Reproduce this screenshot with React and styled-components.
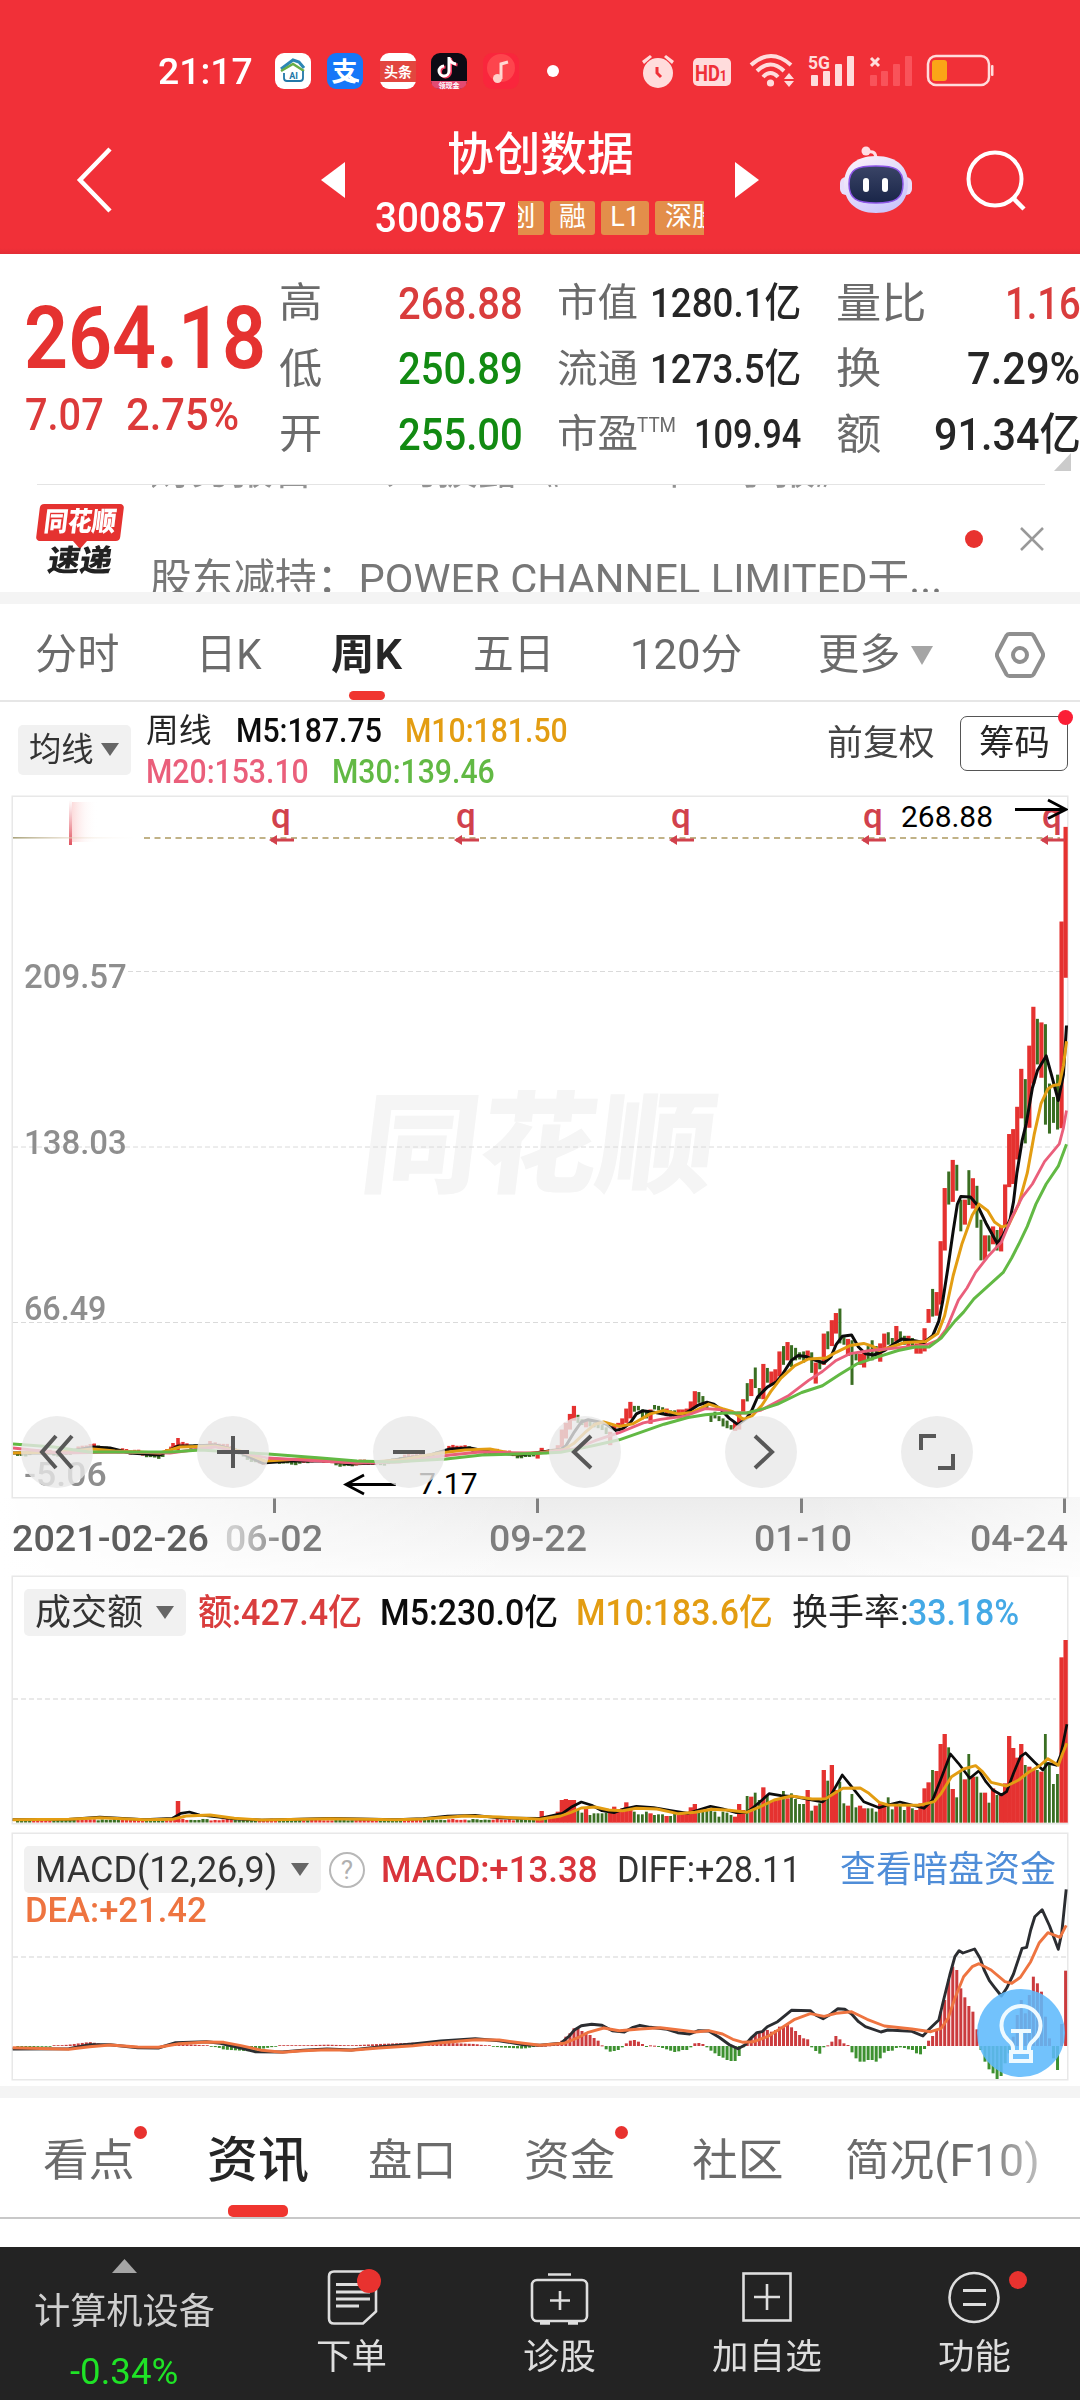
import { useLayoutEffect, useRef, useState } from "react";
import styled, { createGlobalStyle } from "styled-components";

const UP = "#e53230";
const DOWN = "#3a6e22";
const ORANGE = "#e39d12";
const PINK = "#ea5f7b";
const GREEN = "#62b944";

// Text squeezed to a given width, the quote font is narrower than Roboto
const Fit = ({ w, ml, size, color, weight, italic, children }) => {
    const ref = useRef(null);
    const [scale, setScale] = useState(1);
    useLayoutEffect(() => {
        setScale((w + size * 0.08) / ref.current.offsetWidth);
    }, [w, size]);
    return (
        <FitBox $w={w} $ml={ml} $size={size} $color={color} $weight={weight} $italic={italic}>
            <span ref={ref} style={{ transform: `scaleX(${scale})` }}>
                {children}
            </span>
        </FitBox>
    );
};

/* ---------- chart data ---------- */

// newest week first: direction, high, low, volume top, macd end
const weeks = [
    [1, 105, 443, 210, 1202], [1, 317, 780, 262, 1362], [0, 660, 783, 612, 1500], [0, 710, 768, 642, 1465],
    [0, 680, 792, 583, 1405], [0, 547, 772, 492, 1340], [1, 543, 667, 605, 1265], [0, 535, 637, 600, 1240],
    [1, 508, 680, 600, 1220], [1, 595, 779, 590, 1275], [0, 670, 814, 585, 1330], [1, 647, 758, 522, 1290],
    [1, 732, 850, 563, 1335], [1, 782, 905, 534, 1400], [1, 793, 912, 498, 1450], [1, 906, 1000, 640, 1480],
    [1, 1000, 1056, 670, 1518], [0, 1008, 1054, 675, 1527], [1, 1000, 1040, 655, 1510], [0, 1020, 1056, 698, 1498],
    [1, 1020, 1075, 668, 1475], [0, 985, 1076, 668, 1440], [0, 909, 1003, 620, 1378], [1, 892, 960, 620, 1325],
    [0, 874, 952, 552, 1308], [1, 940, 996, 628, 1282], [0, 940, 1011, 605, 1255], [0, 862, 920, 682, 1200],
    [1, 851, 945, 657, 1190], [0, 877, 951, 532, 1228], [1, 914, 1054, 492, 1290], [1, 1033, 1175, 522, 1325],
    [1, 1147, 1200, 603, 1382], [0, 1140, 1202, 600, 1398], [1, 1185, 1216, 637, 1412], [1, 1228, 1280, 655, 1437],
    [1, 1255, 1285, 700, 1453], [1, 1262, 1285, 720, 1450], [0, 1250, 1270, 715, 1440], [1, 1245, 1268, 708, 1438],
    [0, 1245, 1265, 720, 1434], [0, 1235, 1258, 705, 1432], [1, 1223, 1258, 705, 1434], [0, 1250, 1265, 718, 1442],
    [0, 1237, 1265, 682, 1443], [1, 1240, 1280, 703, 1448], [1, 1262, 1303, 700, 1465], [0, 1268, 1292, 725, 1475],
    [0, 1255, 1300, 715, 1470], [0, 1268, 1300, 715, 1470], [1, 1280, 1316, 715, 1475], [1, 1285, 1310, 707, 1475],
    [0, 1283, 1300, 712, 1465], [0, 1255, 1355, 672, 1447], [1, 1252, 1290, 707, 1425], [0, 1248, 1265, 700, 1420],
    [0, 1184, 1262, 635, 1408], [1, 1194, 1240, 660, 1398], [1, 1210, 1268, 585, 1415], [0, 1235, 1275, 632, 1426],
    [1, 1240, 1310, 600, 1432], [0, 1300, 1320, 700, 1451], [1, 1305, 1352, 707, 1443], [0, 1282, 1328, 722, 1432],
    [1, 1278, 1298, 660, 1408], [0, 1280, 1305, 702, 1405], [0, 1282, 1298, 702, 1395], [0, 1272, 1300, 687, 1383],
    [0, 1266, 1315, 670, 1372], [1, 1259, 1300, 685, 1360], [0, 1268, 1310, 663, 1368], [1, 1280, 1336, 690, 1370],
    [1, 1320, 1355, 690, 1380], [1, 1325, 1355, 695, 1385], [0, 1317, 1350, 675, 1380], [1, 1308, 1387, 652, 1380],
    [0, 1362, 1386, 690, 1388], [0, 1316, 1362, 668, 1392], [1, 1342, 1380, 680, 1405], [0, 1351, 1392, 678, 1415],
    [1, 1387, 1415, 720, 1432], [1, 1415, 1455, 702, 1458], [1, 1440, 1458, 740, 1473], [0, 1445, 1455, 735, 1473],
    [0, 1435, 1452, 728, 1470], [0, 1430, 1448, 725, 1463], [0, 1425, 1436, 740, 1458], [0, 1415, 1430, 725, 1450],
    [0, 1420, 1438, 720, 1442], [0, 1395, 1410, 722, 1432], [0, 1380, 1400, 722, 1422], [0, 1371, 1395, 722, 1419],
    [1, 1369, 1405, 702, 1420], [1, 1392, 1412, 712, 1432], [1, 1408, 1422, 730, 1440], [1, 1410, 1425, 730, 1440],
    [1, 1410, 1430, 730, 1444], [0, 1412, 1428, 722, 1446], [0, 1412, 1426, 738, 1442], [1, 1408, 1425, 738, 1438],
    [0, 1405, 1420, 733, 1434], [0, 1402, 1412, 733, 1431], [0, 1400, 1410, 735, 1427], [1, 1410, 1442, 730, 1426],
    [0, 1412, 1430, 725, 1430], [0, 1410, 1432, 733, 1422], [0, 1402, 1412, 733, 1415], [0, 1402, 1415, 725, 1410],
    [1, 1393, 1430, 715, 1412], [1, 1408, 1440, 697, 1420], [1, 1430, 1448, 715, 1432], [1, 1440, 1450, 718, 1440],
    [1, 1445, 1455, 710, 1443], [1, 1460, 1490, 722, 1445], [0, 1450, 1465, 728, 1438], [0, 1445, 1456, 730, 1426],
    [0, 1442, 1452, 730, 1412], [0, 1440, 1450, 730, 1404], [0, 1436, 1448, 735, 1395], [1, 1435, 1450, 716, 1388],
    [0, 1432, 1445, 728, 1383], [0, 1422, 1440, 718, 1375], [1, 1402, 1435, 690, 1375], [1, 1420, 1455, 690, 1390],
    [1, 1440, 1475, 687, 1400], [1, 1455, 1495, 690, 1412], [1, 1490, 1502, 725, 1420], [1, 1498, 1506, 735, 1424],
    [1, 1500, 1508, 738, 1426], [0, 1502, 1510, 740, 1427], [1, 1496, 1510, 723, 1427], [1, 1504, 1520, 742, 1427],
];

const pts = (s) => s.trim().split(/\s+/).map((p) => p.split(",").map(Number));
const toLine = (list) => list.map((p) => p.map((n) => n.toFixed(1)).join(",")).join(" ");
const kPts = (s) => pts(s).map(([x, y]) => [540 + x / 2.904, 780 + y / 2.24]);
const subPts = (s, x0 = 540) => pts(s).map(([x, y]) => [x0 + x / 2.904, 1570 + y / 3]);
const valueAt = (list, x) => {
    const i = Math.max(1, list.findIndex((p) => p[0] >= x));
    const [a, b] = [list[i - 1], list[i]];
    return a[1] + ((b[1] - a[1]) * (x - a[0])) / (b[0] - a[0]);
};
const weekX = (i) => 1065.6 - i * 4.03;

const ma5 = [
    ...pts("13,1453 60,1453 93,1447 110,1448 130,1453 160,1455 178,1446 192,1446 215,1445 235,1450 262,1463 290,1461 330,1461 350,1464 375,1463 400,1459 430,1455 450,1449 470,1448 490,1452 520,1455"),
    ...kPts("0,1506 60,1500 75,1492 100,1460 120,1438 140,1433 165,1437 190,1442 205,1450 220,1457 240,1453 262,1440 280,1420 298,1413 335,1417 370,1422 410,1424 440,1410 460,1400 485,1394 505,1398 525,1410 550,1430 575,1444 600,1430 615,1412 632,1382 660,1360 687,1348 705,1330 730,1300 750,1289 775,1292 800,1300 825,1306 845,1292 860,1265 878,1246 905,1243 925,1270 945,1285 970,1288 1000,1278 1030,1262 1050,1252 1080,1255 1115,1260 1140,1245 1158,1212 1170,1165 1185,1090 1200,1010 1212,950 1222,933 1250,934 1270,952 1295,992 1328,1038 1345,1020 1365,985 1375,945 1385,880 1400,808 1412,770 1430,690 1445,650 1470,618 1485,660 1505,718 1520,660 1529,550"),
];
const ma10 = [
    ...pts("13,1453 60,1452 93,1449 115,1451 160,1453 180,1447 215,1446 240,1451 265,1461 300,1459 330,1461 357,1463 400,1460 440,1453 465,1450 490,1449 515,1454"),
    ...kPts("0,1507 70,1500 100,1485 130,1462 160,1443 185,1438 230,1448 270,1442 320,1420 360,1412 400,1420 440,1417 490,1398 530,1408 560,1415 590,1432 615,1425 645,1400 670,1370 700,1340 740,1312 780,1297 830,1295 860,1282 900,1267 940,1262 965,1268 985,1278 1020,1270 1060,1260 1120,1258 1155,1240 1175,1200 1200,1110 1225,1040 1255,975 1275,950 1300,965 1320,990 1340,1001 1360,998 1390,950 1415,880 1435,795 1455,725 1475,692 1490,684 1508,682 1520,640 1529,585"),
];
const ma20 = [
    ...pts("13,1448 60,1453 120,1452 170,1453 215,1447 268,1458 320,1461 357,1463 400,1462 450,1455 480,1452 530,1453"),
    ...kPts("0,1507 100,1498 160,1480 230,1462 300,1440 350,1432 420,1425 480,1408 520,1410 560,1418 600,1418 640,1412 720,1380 780,1345 820,1325 860,1300 900,1285 960,1278 1040,1272 1120,1266 1155,1255 1180,1230 1215,1165 1240,1138 1265,1103 1300,1068 1340,1035 1370,980 1400,935 1430,905 1465,855 1490,832 1508,815 1520,780 1529,740"),
];
const ma30 = [
    ...pts("13,1444 54,1447 89,1452 171,1452 200,1450 268,1454 321,1458 357,1461 393,1462 446,1459 482,1455"),
    ...kPts("0,1508 60,1506 100,1500 160,1490 230,1478 290,1462 360,1443 430,1428 480,1422 540,1418 600,1418 650,1408 690,1398 760,1372 820,1357 870,1332 920,1308 970,1295 1040,1278 1090,1270 1130,1270 1165,1250 1205,1212 1230,1192 1260,1162 1300,1134 1345,1103 1370,1070 1390,1040 1415,1000 1440,950 1470,905 1505,865 1529,816"),
];
const vol5 = [
    ...subPts("37,749 200,748 290,741 420,749 500,745 525,730 550,726 580,735 680,747 760,750 960,745 1150,749 1230,746 1300,738 1380,736 1450,744", 0),
    ...subPts("0,745 30,738 65,730 90,712 120,696 150,706 180,722 215,728 245,716 280,709 330,713 380,722 430,730 460,720 495,709 530,716 570,728 600,727 620,712 645,690 665,671 700,677 740,680 780,688 820,696 845,675 878,615 905,650 940,695 985,713 1010,705 1045,696 1080,705 1115,715 1140,690 1165,625 1192,552 1215,580 1248,625 1275,602 1295,635 1315,660 1340,675 1355,665 1375,610 1395,560 1410,549 1435,575 1460,600 1475,580 1500,586 1512,555 1530,463"),
];
const vol10 = [
    ...subPts("37,749 200,748 290,743 420,749 500,748 540,738 610,735 680,745 760,750 960,746 1150,749 1230,747 1350,738 1450,741", 0),
    ...subPts("0,748 60,738 90,727 120,714 160,711 200,720 240,722 280,715 340,717 400,731 450,727 500,718 550,721 600,727 640,710 680,690 730,678 790,687 830,686 855,670 880,655 930,654 955,670 985,697 1010,705 1100,706 1145,695 1165,670 1195,620 1230,597 1265,587 1285,605 1310,637 1355,648 1390,630 1420,606 1450,588 1475,566 1505,586 1518,550 1530,520"),
];
const diff = [
    ...subPts("37,1437 200,1436 260,1424 320,1424 400,1433 460,1434 510,1418 600,1415 640,1420 700,1434 740,1445 820,1446 880,1441 950,1437 1020,1440 1100,1431 1200,1422 1280,1413 1380,1406 1450,1412 1520,1424", 0),
    ...subPts("0,1426 60,1420 85,1398 100,1380 120,1367 150,1363 180,1366 210,1382 245,1386 270,1372 290,1366 320,1372 370,1378 400,1388 435,1392 460,1382 490,1383 520,1402 550,1424 575,1436 595,1425 615,1402 630,1388 645,1385 660,1370 690,1355 730,1321 785,1322 800,1335 822,1346 845,1332 865,1316 885,1318 905,1332 925,1355 945,1370 990,1386 1010,1380 1080,1384 1112,1398 1130,1378 1158,1350 1172,1290 1190,1215 1205,1160 1217,1142 1228,1149 1262,1137 1278,1165 1290,1200 1305,1232 1320,1252 1340,1278 1355,1255 1375,1212 1400,1135 1413,1132 1425,1080 1437,1040 1458,1019 1480,1068 1505,1138 1515,1090 1528,958"),
];
const dea = [
    ...subPts("37,1433 200,1438 260,1430 320,1425 400,1431 460,1432 520,1421 600,1416 650,1417 700,1427 760,1441 820,1447 880,1442 950,1439 1020,1441 1100,1434 1200,1427 1280,1418 1380,1409 1450,1410 1520,1420", 0),
    ...subPts("0,1426 70,1420 110,1403 140,1387 185,1374 230,1382 290,1377 350,1373 410,1381 450,1386 490,1382 530,1392 560,1408 590,1417 620,1415 660,1400 700,1375 740,1348 785,1331 825,1339 860,1330 905,1325 950,1348 1000,1368 1080,1377 1135,1385 1165,1375 1185,1345 1205,1285 1230,1220 1255,1190 1275,1181 1310,1200 1350,1235 1370,1240 1395,1222 1425,1175 1450,1118 1475,1088 1510,1102 1528,1066"),
];

// the flat early years: small bodies that follow the averages
const early = Array.from({ length: 261 - weeks.length }, (_, n) => {
    const i = n + weeks.length;
    const x = weekX(i);
    const wave = Math.sin(i * 0.55) + Math.sin(i * 1.7) * 0.5;
    const mid = valueAt(ma5, x) - wave * 1.5;
    return { x, up: wave > 0, mid, vol: 2 + Math.abs(wave) * 1.2, macd: valueAt(diff, x) - valueAt(dea, x) };
});

const Lines = ({ items }) =>
    items.map(([list, color, width]) => (
        <polyline key={color} points={toLine(list)} fill="none" stroke={color} strokeWidth={width} strokeLinejoin="round" />
    ));

const KChart = () => (
    <ChartSvg viewBox="13 797 1055 700" width="1055" height="700">
        <defs>
            <linearGradient id="glow" x1="0" x2="1">
                <stop offset="0" stopColor="#fbd0d0" stopOpacity="0.75" />
                <stop offset="0.5" stopColor="#fdeeee" stopOpacity="0.4" />
                <stop offset="1" stopColor="#fff" stopOpacity="0" />
            </linearGradient>
            <linearGradient id="streak" x1="0" x2="0" y1="0" y2="1">
                <stop offset="0" stopColor="#e86a74" stopOpacity="0" />
                <stop offset="1" stopColor="#e05360" />
            </linearGradient>
            <linearGradient id="fade" x1="0" x2="1">
                <stop offset="0" stopColor="#a9a37c" />
                <stop offset="0.5" stopColor="#e9d9c5" stopOpacity="0.5" />
                <stop offset="1" stopColor="#fff" stopOpacity="0" />
            </linearGradient>
        </defs>
        <g stroke="#dadada" strokeWidth="1" strokeDasharray="5 3">
            <path d="M128 971.5H1060" />
            <path d="M13 1147H1060" />
            <path d="M13 1322.5H1066" />
        </g>
        <rect x="72" y="802" width="26" height="40" fill="url(#glow)" />
        <rect x="69" y="800" width="3" height="45" fill="url(#streak)" />
        <rect x="13" y="837" width="130" height="1.6" fill="url(#fade)" />
        <path d="M144 838H1060" stroke="#ad9960" strokeWidth="1.6" strokeDasharray="6 4.5" />
        {early.map((d) => (
            <rect key={d.x} x={d.x - 1.8} y={d.mid - 2} width="3.4" height="4" fill={d.up ? UP : DOWN} />
        ))}
        <path d="M178 1438v12M173 1443v6M94 1444v5M210 1441v6" stroke={UP} strokeWidth="3.6" />
        {weeks.map(([up, high, low], i) => (
            <rect
                key={i}
                x={weekX(i) - (up ? 2.1 : 1.5)}
                y={780 + high / 2.24}
                width={up ? 4.2 : 3}
                height={(low - high) / 2.24}
                fill={up ? UP : DOWN}
            />
        ))}
        <Lines items={[[ma5, "#0c0c0c", 3], [ma10, ORANGE, 3], [ma20, PINK, 2.8], [ma30, GREEN, 3]]} />
        {[281, 466, 681, 873, 1052].map((x) => (
            <g key={x}>
                <text x={x} y="828" textAnchor="middle" fontSize="35" fontWeight="500" fill="#d1414c">
                    q
                </text>
                <path d={`M${x - 10} 840h23`} stroke="#d1414c" strokeWidth="3" />
                <path d={`M${x - 12} 840l8 -5v10z`} fill="#d1414c" />
            </g>
        ))}
        <text x="901" y="827" fontSize="30" fill="#000" textLength="92" lengthAdjust="spacingAndGlyphs">
            268.88
        </text>
        <path d="M1015 809.5H1065M1048 800L1066 809.5L1048 818.5" fill="none" stroke="#000" strokeWidth="2.8" />
        <text x="419" y="1494" fontSize="30" fill="#000">
            7.17
        </text>
        <path d="M396 1484.500H346M364 1475L346 1484.500L364 1494" fill="none" stroke="#000" strokeWidth="2.8" />
    </ChartSvg>
);

const VolumeChart = () => (
    <SubSvg viewBox="13 1577 1055 246" width="1055" height="246">
        <path d="M13 1699H1056" stroke="#e2e2e2" strokeWidth="1.5" strokeDasharray="5 3" />
        {early.map((d) => (
            <rect key={d.x} x={d.x - 1.8} y={1822.5 - d.vol} width="3.2" height={d.vol} fill={d.up ? UP : DOWN} />
        ))}
        <path d="M178 1801v21" stroke={UP} strokeWidth="4.5" />
        {weeks.map(([up, , , vol], i) => (
            <rect
                key={i}
                x={weekX(i) - (up ? 2.15 : 1.5)}
                y={1570 + vol / 3}
                width={up ? 4.3 : 2.8}
                height={(758 - vol) / 3}
                fill={up ? UP : DOWN}
            />
        ))}
        <Lines items={[[vol5, "#0c0c0c", 2.7], [vol10, ORANGE, 2.9]]} />
    </SubSvg>
);

const MacdChart = () => (
    <SubSvg viewBox="13 1834 1055 245" width="1055" height="245">
        <path d="M13 1957H1066" stroke="#e2e2e2" strokeWidth="1.5" strokeDasharray="5 3" />
        {early.map((d) => {
            const h = Math.max(0.8, Math.abs(d.macd) * 2);
            return (
                <rect key={d.x} x={d.x - 1.5} y={d.macd > 0 ? 2046 : 2046 - h} width="3" height={h} fill={d.macd > 0 ? "#3d9130" : "#c93d3d"} />
            );
        })}
        {weeks.map(([, , , , end], i) => (
            <rect
                key={i}
                x={weekX(i) - 1.5}
                y={1570 + Math.min(end, 1428) / 3}
                width="3"
                height={Math.max(1, Math.abs(end - 1428) / 3)}
                fill={end > 1428 ? "#3d9130" : "#cb3b3e"}
            />
        ))}
        <Lines items={[[diff, "#2b2d31", 2.9], [dea, "#ee7440", 2.9]]} />
    </SubSvg>
);

/* ---------- icons ---------- */

const StatusApps = () => (
    <svg width="290" height="40" viewBox="273 51 290 40">
        <rect x="275" y="53" width="36" height="36" rx="9" fill="#fff" />
        <path d="M281 69l12-9 6 2 5 6" fill="none" stroke="#2c86b5" strokeWidth="3" />
        <path d="M281 71l12-7 11 7" fill="none" stroke="#67ad45" strokeWidth="2.4" />
        <path d="M284 73v5q0 3 3 3h13q3 0 3-3v-7" fill="none" stroke="#2277a8" strokeWidth="1.8" />
        <text x="293.500" y="79" fontSize="9" fontWeight="700" textAnchor="middle" fill="#2277a8">AI</text>
        <rect x="327" y="53" width="36" height="36" rx="9" fill="#1677f8" />
        <text x="344.500" y="81" fontSize="26" fontWeight="700" textAnchor="middle" fill="#fff">支</text>
        <path d="M349 76q4 4 10 5" stroke="#fff" strokeWidth="3" fill="none" />
        <rect x="380" y="53" width="36" height="36" rx="9" fill="#fff" />
        <rect x="380" y="61" width="36" height="21" fill="#e2463f" />
        <text x="398" y="77" fontSize="14" fontWeight="700" textAnchor="middle" fill="#fff">头条</text>
        <rect x="431" y="53" width="36" height="36" rx="9" fill="#0c0a14" />
        <path d="M431 81h36q-1 8-9 8h-18q-8 0-9-8z" fill="#e34a72" />
        <text x="449" y="88" fontSize="7" fontWeight="700" textAnchor="middle" fill="#fff">领现金</text>
        <g fill="none" strokeWidth="3">
            <path d="M450.500 58v14a5 5 0 1 1-5-5M450.500 59q1 5 7 6" stroke="#f33b60" />
            <path d="M449 57v14a5 5 0 1 1-5-5M449 58q1 5 7 6" stroke="#fff" />
        </g>
        <rect x="483" y="53" width="36" height="36" rx="9" fill="#f9263c" />
        <circle cx="501" cy="68" r="14" fill="#ff5a58" opacity="0.6" />
        <path d="M508 62l-7 2v15" fill="none" stroke="#ffd8d2" strokeWidth="3" />
        <circle cx="497.500" cy="78.500" r="4.500" fill="#ffd0c9" />
        <circle cx="553" cy="71" r="6" fill="#fff" />
    </svg>
);

const StatusSystem = () => (
    <svg width="360" height="40" viewBox="640 51 360 40">
        <g fill="#ffdcdc">
            <circle cx="658" cy="73" r="15" />
            <path d="M642 61l8-6 2 2-8 7zM674 61l-8-6-2 2 8 7z" />
            <path d="M657 67v6l4 4" fill="none" stroke="#ef3038" strokeWidth="3" />
            <rect x="693" y="58" width="38" height="28" rx="5" />
            <circle cx="770.500" cy="83" r="3.600" />
            <path d="M784 79l5-6 5 6zM784 81l5 6 5-6z" />
            <rect x="811" y="75" width="7" height="11" rx="1" />
            <rect x="823" y="71" width="7" height="15" rx="1" />
            <rect x="835" y="64" width="7" height="22" rx="1" />
            <rect x="847" y="56" width="7" height="30" rx="1" />
        </g>
        <text x="711" y="81" fontSize="22" fontWeight="700" textAnchor="middle" fill="#ef3038" textLength="32" lengthAdjust="spacingAndGlyphs">
            HD<tspan fontSize="15">1</tspan>
        </text>
        <g fill="none" stroke="#ffdcdc" strokeWidth="4">
            <path d="M751 65q20-18 40 0M757 71q13.500-13 27 0M763 77q7.500-8 15 0" />
        </g>
        <text x="808" y="69" fontSize="18" fontWeight="700" fill="#ffdcdc" textLength="22" lengthAdjust="spacingAndGlyphs">
            5G
        </text>
        <path d="M871 58l8 8M879 58l-8 8" stroke="#ffdcdc" strokeWidth="3" />
        <g fill="#f9535a">
            <rect x="870" y="75" width="7" height="11" rx="1" />
            <rect x="881" y="71" width="7" height="15" rx="1" />
            <rect x="893" y="64" width="7" height="22" rx="1" />
            <rect x="905" y="56" width="7" height="30" rx="1" />
        </g>
        <rect x="928" y="56" width="61" height="29" rx="8" fill="none" stroke="#ffdcdc" strokeWidth="2.500" />
        <rect x="932" y="60" width="15" height="21" rx="3" fill="#fba517" />
        <rect x="991" y="65" width="2.500" height="11" rx="1" fill="#ffdcdc" />
    </svg>
);

const Robot = () => (
    <svg width="76" height="70" viewBox="838 144 76 70">
        <defs>
            <linearGradient id="head" x1="0" y1="0" x2="0.6" y2="1">
                <stop offset="0" stopColor="#fff5fa" />
                <stop offset="1" stopColor="#ccc6fb" />
            </linearGradient>
            <linearGradient id="face" x1="0.500" y1="0" x2="0.500" y2="1">
                <stop offset="0" stopColor="#3a4466" />
                <stop offset="1" stopColor="#192548" />
            </linearGradient>
        </defs>
        <circle cx="866" cy="150" r="4.500" fill="#ffdfe6" />
        <path d="M868 151q8-2 8 7" fill="none" stroke="#ffdfe6" strokeWidth="3" />
        <rect x="840" y="176" width="72" height="18" rx="6" fill="#e7defb" />
        <path d="M876 155c22 0 32 12 32 28s-10 29-32 29-32-13-32-29 10-28 32-28z" fill="url(#head)" />
        <path d="M876 165c19 0 27 3 27 18s-8 19-27 19-27-4-27-19 8-18 27-18z" fill="url(#face)" stroke="#8c55e6" strokeWidth="1.500" />
        <rect x="863" y="177" width="6" height="14" rx="3" fill="#fff" />
        <rect x="882" y="177" width="6" height="14" rx="3" fill="#fff" />
    </svg>
);

const SearchIcon = () => (
    <svg width="62" height="62" viewBox="965 150 62 62" fill="none" stroke="#fff" strokeWidth="4">
        <circle cx="995" cy="180" r="26.500" />
        <path d="M1013 199l11 11" strokeWidth="4.500" />
    </svg>
);

const Triangle = ({ w, h, color, dir = "down" }) => {
    const d = {
        down: `M0 0H${w}L${w / 2} ${h}z`,
        up: `M0 ${h}H${w}L${w / 2} 0z`,
        left: `M${w} 0V${h}L0 ${h / 2}z`,
        right: `M0 0V${h}L${w} ${h / 2}z`,
        corner: `M${w} 0V${h}H0z`,
    };
    return (
        <svg width={w} height={h}>
            <path d={d[dir]} fill={color} />
        </svg>
    );
};

const HexIcon = () => (
    <svg width="50" height="48" viewBox="0 0 50 48" fill="none" stroke="#8f8f8f" strokeWidth="4">
        <path d="M14.500 3h21q2 0 3 1.500l9 17q1.200 2.500 0 5l-9 17q-1 1.500-3 1.500h-21q-2 0-3-1.500l-9-17q-1.200-2.500 0-5l9-17q1-1.500 3-1.500z" />
        <circle cx="25" cy="24" r="7" />
    </svg>
);

const toolPaths = {
    first: "M35 20L21 36L35 52M51 20L37 36L51 52",
    plus: "M20 36H52M36 20V52",
    minus: "M20 36H52",
    prev: "M42 20L25 36L42 52",
    next: "M30 20L47 36L30 52",
    full: "M20 34V20H35M52 38V52H37",
};

const BulbIcon = () => (
    <svg width="88" height="88" viewBox="0 0 88 88" fill="none" stroke="#eefaff" strokeWidth="4">
        <path d="M36 64V59Q36 55 31 51A19.500 19.500 0 1 1 57 51Q52 55 52 59V64" />
        <path d="M34 42H54M44 42V62M34 63H54V72H34z" />
    </svg>
);

const OrderIcon = () => (
    <svg width="60" height="60" viewBox="322 2267 60 60" fill="none" stroke="#dedede" strokeWidth="2.600">
        <path d="M334 2271.500h37q5 0 5 5v35l-13 12h-29q-5 0-5-5v-42q0-5 5-5z" />
        <path d="M336 2284.500h28M336 2292h34M336 2299h34M336 2306h23" strokeWidth="3" />
    </svg>
);
const DiagnoseIcon = () => (
    <svg width="60" height="60" viewBox="529 2267 60 60" fill="none" stroke="#dedede" strokeWidth="2.600">
        <rect x="532" y="2280" width="55" height="41" rx="5" />
        <path d="M548 2274.500h23M560 2291v19M550 2300.500h20" />
        <path d="M540 2323h10M568 2323h10" strokeWidth="3.500" />
    </svg>
);
const AddIcon = () => (
    <svg width="60" height="60" viewBox="737 2267 60 60" fill="none" stroke="#dedede" strokeWidth="2.600">
        <rect x="743.500" y="2273.500" width="47" height="47" />
        <path d="M767 2284v26M754 2297h26" />
    </svg>
);
const MenuIcon = () => (
    <svg width="60" height="60" viewBox="945 2267 60 60" fill="none" stroke="#dedede" strokeWidth="2.600">
        <circle cx="975" cy="2297.500" r="24.500" />
        <path d="M964 2290.500h23M964 2304.500h23" strokeWidth="3" />
    </svg>
);

/* ---------- page ---------- */

const quotes = [
    [["高", "268.88", "#d93d3d"], ["市值", "1280.1亿", 148], ["量比", "1.16", 72, "#d93d3d", 87]],
    [["低", "250.89", "#128a12"], ["流通", "1273.5亿", 148], ["换", "7.29%", 110, "#262626", 42]],
    [["开", "255.00", "#128a12"], ["市盈", "109.94", 104], ["额", "91.34亿", 143, "#262626", 42]],
];

const App = () => (
    <Page>
        <GlobalStyle />
        <StatusBar>
            <Fit w={92} size={37} color="#fff" weight={500}>21:17</Fit>
            <StatusApps />
            <StatusSystem />
        </StatusBar>
        <Header>
            <svg width="38" height="66" fill="none" stroke="#fff" strokeWidth="4.500">
                <path d="M35 2L5 33L35 64" />
            </svg>
            <Switcher>
                <Triangle w={24} h={36} color="#fff" dir="left" />
                <Title>
                    <Fit w={183} size={46} color="#fff" weight={500}>协创数据</Fit>
                    <CodeRow>
                        <Fit w={128} size={42} color="#fff" weight={500}>300857</Fit>
                        <Tags>
                            <Tag $w={44}>创</Tag>
                            <Tag $w={45}>融</Tag>
                            <Tag $w={48}>L1</Tag>
                            <Tag $w={74}>深股</Tag>
                        </Tags>
                    </CodeRow>
                </Title>
                <Triangle w={24} h={36} color="#fff" dir="right" />
            </Switcher>
            <Robot />
            <SearchIcon />
        </Header>

        <Quote>
            <Price>
                <Fit w={235} size={87} color={UP} weight={600}>264.18</Fit>
                <Row>
                    <Fit w={75} size={44} color="#dc3a3a" weight={500}>7.07</Fit>
                    <Fit w={110} ml={26} size={44} color="#dc3a3a" weight={500}>2.75%</Fit>
                </Row>
            </Price>
            <Grid>
                {quotes.map(([a, b, c]) => (
                    <GridRow key={a[0]}>
                        <Fit w={40} size={41} color="#6b6b6b">{a[0]}</Fit>
                        <Fit w={121} ml={79} size={44} color={a[2]} weight={500}>{a[1]}</Fit>
                        <Cell $ml={38} $w={241}>
                            <Row>
                                <Fit w={78} size={39} color="#6b6b6b">{b[0]}</Fit>
                                {b[0] === "市盈" && (
                                    <Sup>
                                        <Fit w={37} size={20} color="#6b6b6b">TTM</Fit>
                                    </Sup>
                                )}
                            </Row>
                            <Fit w={b[2]} size={41} color="#262626" weight={500}>{b[1]}</Fit>
                        </Cell>
                        <Cell $ml={38} $w={241}>
                            <Fit w={c[4]} size={42} color="#6b6b6b">{c[0]}</Fit>
                            <Fit w={c[2]} size={44} color={c[3]} weight={500}>{c[1]}</Fit>
                        </Cell>
                    </GridRow>
                ))}
            </Grid>
            <Corner>
                <Triangle w={17} h={18} color="#cbcbcb" dir="corner" />
            </Corner>
        </Quote>
        <News>
            <Brand>
                <BrandTop>
                    <Fit w={70} size={27} color="#fff" weight={900}>同花顺</Fit>
                </BrandTop>
                <Triangle w={14} h={8} color={UP} />
                <BrandName>
                    <Fit w={62} size={30} color="#222" weight={900}>速递</Fit>
                </BrandName>
            </Brand>
            <Ticker>
                <TickerOld>
                    <Fit w={703} size={41} color="#777">财务报告：公司披露《2026年一季报》</Fit>
                </TickerOld>
                <Fit w={789} size={41} color="#777">股东减持：POWER CHANNEL LIMITED干...</Fit>
            </Ticker>
            <RedDot $size={18} />
            <svg width="26" height="26" stroke="#999" strokeWidth="2.500">
                <path d="M2 2L24 24M24 2L2 24" />
            </svg>
        </News>
        <Band $h={12} />

        <Tabs $h={98}>
            <Fit w={81} ml={37} size={42} color="#6b6b6b">分时</Fit>
            <Fit w={62} ml={80} size={42} color="#6b6b6b">日K</Fit>
            <Active $ml={73} $w={36} $h={9}>
                <Fit w={68} size={42} color="#262626" weight={600}>周K</Fit>
            </Active>
            <Fit w={78} ml={74} size={42} color="#6b6b6b">五日</Fit>
            <Fit w={109} ml={79} size={42} color="#6b6b6b">120分</Fit>
            <Fit w={79} ml={79} size={42} color="#6b6b6b">更多</Fit>
            <Gap $w={12} />
            <Triangle w={22} h={19} color="#a5a5a5" />
            <Gap $w={62} />
            <HexIcon />
        </Tabs>

        <Averages>
            <Picker $w={113} $h={50}>
                <Fit w={62} size={33} color="#333">均线</Fit>
                <Triangle w={18} h={13} color="#666" />
            </Picker>
            <Legend>
                <Row>
                    <Fit w={63} size={33} color="#262626">周线</Fit>
                    <Fit w={143} ml={27} size={33} color="#0c0c0c" weight={500}>M5:187.75</Fit>
                    <Fit w={160} ml={26} size={33} color={ORANGE} weight={500}>M10:181.50</Fit>
                </Row>
                <Row>
                    <Fit w={160} size={33} color={PINK} weight={500}>M20:153.10</Fit>
                    <Fit w={160} ml={26} size={33} color={GREEN} weight={500}>M30:139.46</Fit>
                </Row>
            </Legend>
            <Adjust>
                <Fit w={105} size={35} color="#444">前复权</Fit>
                <Chips>
                    <Fit w={68} size={35} color="#262626">筹码</Fit>
                    <ChipsDot $size={15} />
                </Chips>
            </Adjust>
        </Averages>

        <KPanel>
            <Watermark>
                <Fit w={345} size={110} color="#f5f5f5" weight={900}>同花顺</Fit>
            </Watermark>
            <KChart />
            <Scale>
                {["209.57", "138.03", "66.49", "-5.06"].map((n) => (
                    <Fit key={n} w={n.length === 6 ? 100 : 80} size={34} color="#8e8e8e" weight={500}>{n}</Fit>
                ))}
            </Scale>
            <Tools>
                {Object.entries(toolPaths).map(([name, d]) => (
                    <Tool key={name}>
                        <svg width="72" height="72" viewBox="0 0 72 72" fill="none" stroke="#585858" strokeWidth="4">
                            <path d={d} />
                        </svg>
                    </Tool>
                ))}
            </Tools>
        </KPanel>
        <Axis>
            <Ticks>
                <Tick />
                <Tick />
                <Tick />
                <Tick />
            </Ticks>
            <Row>
                <Fit w={194} size={36} color="#5e5e5e" weight={500}>2021-02-26</Fit>
                <Faded>
                    <Fit w={95} ml={19} size={36} color="#7d7d7d" weight={500}>06-02</Fit>
                </Faded>
                <Fit w={95} ml={169} size={36} color="#7d7d7d" weight={500}>09-22</Fit>
                <Fit w={95} ml={170} size={36} color="#7d7d7d" weight={500}>01-10</Fit>
                <Fit w={95} ml={121} size={36} color="#7d7d7d" weight={500}>04-24</Fit>
            </Row>
        </Axis>

        <SubPanel $h={246}>
            <VolumeChart />
            <SubHead>
                <Picker $w={162} $h={47}>
                    <Fit w={105} size={36} color="#333">成交额</Fit>
                    <Triangle w={18} h={13} color="#666" />
                </Picker>
                <Fit w={161} ml={13} size={36} color="#d93d3d" weight={500}>额:427.4亿</Fit>
                <Fit w={175} ml={21} size={36} color="#0c0c0c" weight={500}>M5:230.0亿</Fit>
                <Fit w={194} ml={21} size={36} color={ORANGE} weight={500}>M10:183.6亿</Fit>
                <Fit w={114} ml={22} size={36} color="#262626">换手率:</Fit>
                <Fit w={108} ml={2} size={36} color="#44a9e6" weight={500}>33.18%</Fit>
            </SubHead>
        </SubPanel>
        <SubPanel $h={245} $mt={11}>
            <MacdChart />
            <SubHead>
                <Picker $w={297} $h={47}>
                    <Fit w={239} size={36} color="#333">MACD(12,26,9)</Fit>
                    <Triangle w={18} h={13} color="#666" />
                </Picker>
                <Help>?</Help>
                <Fit w={214} ml={17} size={36} color="#d9343b" weight={500}>MACD:+13.38</Fit>
                <Fit w={181} ml={22} size={36} color="#333">DIFF:+28.11</Fit>
                <Fit w={213} ml={42} size={36} color="#4f8dd8">查看暗盘资金</Fit>
            </SubHead>
            <Dea>
                <Fit w={179} size={35} color="#ee7440" weight={500}>DEA:+21.42</Fit>
            </Dea>
            <Bulb>
                <BulbIcon />
            </Bulb>
        </SubPanel>
        <BandWrap>
            <Band $h={12} />
        </BandWrap>

        <Tabs $h={121} $line="#c8c8c8">
            <Dotted $ml={45}>
                <Fit w={88} size={44} color="#6b6b6b">看点</Fit>
                <TabDot $size={13} />
            </Dotted>
            <Active $ml={76} $w={60} $h={12}>
                <Fit w={98} size={49} color="#262626" weight={500}>资讯</Fit>
            </Active>
            <Fit w={85} ml={63} size={44} color="#6b6b6b">盘口</Fit>
            <Dotted $ml={71}>
                <Fit w={88} size={44} color="#6b6b6b">资金</Fit>
                <TabDot $size={13} />
            </Dotted>
            <Fit w={88} ml={80} size={44} color="#6b6b6b">社区</Fit>
            <FadedEnd>
                <Fit w={191} ml={65} size={44} color="#6b6b6b">简况(F10)</Fit>
            </FadedEnd>
        </Tabs>

        <BottomBar>
            <Sector>
                <Triangle w={25} h={14} color="#a5a5a5" dir="up" />
                <Fit w={178} size={36} color="#cfcfcf">计算机设备</Fit>
                <Fit w={106} size={36} color="#1fe326">-0.34%</Fit>
            </Sector>
            <NavItem>
                <OrderIcon />
                <Fit w={68} size={35} color="#dedede">下单</Fit>
                <NavDot $size={24} $left={109} $top={22} />
            </NavItem>
            <NavItem>
                <DiagnoseIcon />
                <Fit w={70} size={35} color="#dedede">诊股</Fit>
            </NavItem>
            <NavItem>
                <AddIcon />
                <Fit w={107} size={35} color="#dedede">加自选</Fit>
            </NavItem>
            <NavItem>
                <MenuIcon />
                <Fit w={70} size={35} color="#dedede">功能</Fit>
                <NavDot $size={18} $left={138} $top={24} />
            </NavItem>
        </BottomBar>
    </Page>
);

export default App;

const GlobalStyle = createGlobalStyle`
    * {
        box-sizing: border-box;
    }
    body {
        margin: 0;
        background: #fff;
        font-family: Roboto, "Noto Sans CJK SC", sans-serif;
    }
    svg {
        display: block;
        flex-shrink: 0;
    }
`;

const FitBox = styled.div`
    flex-shrink: 0;
    width: ${(p) => p.$w}px;
    height: ${(p) => p.$size}px;
    margin-left: ${(p) => p.$ml || 0}px;
    font-size: ${(p) => p.$size}px;
    font-weight: ${(p) => p.$weight || 400};
    font-style: ${(p) => (p.$italic ? "italic" : "normal")};
    line-height: 1;
    color: ${(p) => p.$color};
    white-space: nowrap;

    span {
        display: inline-block;
        margin-left: -0.04em;
        transform-origin: left;
    }
`;

const Page = styled.div`
    display: flex;
    flex-direction: column;
    width: 1080px;
    height: 2400px;
    overflow: hidden;
    background: #fff;
`;

const Row = styled.div`
    display: flex;
    align-items: center;
`;

const Gap = styled.div`
    width: ${(p) => p.$w}px;
`;

const Band = styled.div`
    flex-shrink: 0;
    height: ${(p) => p.$h}px;
    background: #f4f4f4;
`;

const BandWrap = styled.div`
    padding-top: 7px;
`;

const RedDot = styled.div`
    flex-shrink: 0;
    width: ${(p) => p.$size}px;
    height: ${(p) => p.$size}px;
    border-radius: 50%;
    background: #e8322f;
`;

const StatusBar = styled.div`
    display: flex;
    align-items: center;
    flex-shrink: 0;
    height: 112px;
    padding: 30px 0 0 159px;
    background: #f13038;

    svg:nth-of-type(1) {
        margin-left: 22px;
    }
    svg:nth-of-type(2) {
        margin-left: 77px;
    }
`;

const Header = styled.div`
    display: flex;
    align-items: center;
    flex-shrink: 0;
    height: 142px;
    padding: 0 53px 6px 75px;
    background: linear-gradient(#f13038 96%, #e22d36);

    > svg:nth-of-type(2) {
        margin-left: 79px;
    }
    > svg:nth-of-type(3) {
        margin-left: 51px;
    }
`;

const Switcher = styled.div`
    display: flex;
    align-items: center;
    justify-content: space-between;
    width: 438px;
    margin-left: 208px;
`;

const Title = styled.div`
    display: flex;
    flex-direction: column;
    align-items: center;
    gap: 24px;
    padding: 6px 0 0 1px;
`;

const CodeRow = styled.div`
    display: flex;
    align-items: center;
    gap: 13px;
    height: 34px;
`;

const Tags = styled.div`
    display: flex;
    justify-content: flex-start;
    gap: 6px;
    width: 186px;
    overflow: hidden;

    > :first-child {
        margin-left: -18px;
    }
`;

const Tag = styled.span`
    flex-shrink: 0;
    width: ${(p) => p.$w}px;
    height: 34px;
    border-radius: 3px;
    background: #e38e4a;
    color: #fff;
    font-size: 27px;
    line-height: 33px;
    text-align: center;
`;

const Quote = styled.div`
    position: relative;
    display: flex;
    flex-shrink: 0;
    height: 230px;
`;

const Price = styled.div`
    display: flex;
    flex-direction: column;
    gap: 11px;
    width: 281px;
    padding: 41px 0 0 27px;
`;

const Grid = styled.div`
    display: flex;
    flex-direction: column;
    padding-top: 17px;
`;

const GridRow = styled.div`
    display: flex;
    align-items: center;
    height: 65.5px;
`;

const Cell = styled.div`
    display: flex;
    align-items: center;
    justify-content: space-between;
    width: ${(p) => p.$w}px;
    margin-left: ${(p) => p.$ml}px;
`;

const Sup = styled.div`
    align-self: flex-start;
    margin-left: 1px;
`;

const Corner = styled.div`
    position: absolute;
    right: 9px;
    bottom: 13px;
`;

const News = styled.div`
    display: flex;
    align-items: center;
    flex-shrink: 0;
    height: 108px;
    margin: 0 35px 0 37px;
    border-top: 1.5px solid #e4e4e4;

    > svg {
        margin-left: 36px;
    }
`;

const Brand = styled.div`
    display: flex;
    flex-direction: column;
    align-items: center;
    width: 87px;
    padding-top: 3px;
`;

const BrandTop = styled.div`
    display: flex;
    align-items: center;
    justify-content: center;
    width: 84px;
    height: 37px;
    border-radius: 4px;
    background: ${UP};
    transform: skewX(-7deg);
`;

const BrandName = styled.div`
    margin-top: -3px;
    transform: skewX(-9deg);
`;

const Ticker = styled.div`
    display: flex;
    flex-direction: column;
    justify-content: space-between;
    width: 815px;
    height: 107px;
    margin-left: 28px;
    overflow: hidden;

    > :last-child {
        margin-bottom: -8px;
    }
`;

const TickerOld = styled.div`
    margin-top: -35px;
    opacity: 0.8;
`;

const Tabs = styled.div`
    display: flex;
    align-items: center;
    flex-shrink: 0;
    height: ${(p) => p.$h}px;
    padding-top: 6px;
    border-bottom: 2px solid ${(p) => p.$line || "#e6e6e6"};
`;

const Active = styled.div`
    position: relative;
    display: flex;
    align-items: center;
    height: 100%;
    margin-left: ${(p) => p.$ml}px;

    &::after {
        content: "";
        position: absolute;
        bottom: 0;
        left: calc(50% - ${(p) => p.$w / 2}px);
        width: ${(p) => p.$w}px;
        height: ${(p) => p.$h}px;
        border-radius: 5px;
        background: #f0352f;
    }
`;

const Averages = styled.div`
    display: flex;
    align-items: center;
    flex-shrink: 0;
    height: 95px;
    padding-left: 18px;
`;

const Picker = styled.div`
    display: flex;
    align-items: center;
    justify-content: space-between;
    flex-shrink: 0;
    width: ${(p) => p.$w}px;
    height: ${(p) => p.$h}px;
    padding: 0 12px;
    border-radius: 5px;
    background: #f1f1f1;
`;

const Legend = styled.div`
    display: flex;
    flex-direction: column;
    flex-shrink: 0;
    gap: 8px;
    width: 697px;
    padding: 3px 0 0 16px;
`;

const Adjust = styled.div`
    display: flex;
    align-items: center;
    gap: 27px;
    margin-bottom: 12px;
`;

const Chips = styled.div`
    position: relative;
    display: flex;
    align-items: center;
    justify-content: center;
    width: 108px;
    height: 55px;
    border: 1.5px solid #555;
    border-radius: 7px;
`;

const ChipsDot = styled(RedDot)`
    position: absolute;
    top: -7px;
    right: -6px;
    background: #fb1f36;
`;

const KPanel = styled.div`
    position: relative;
    flex-shrink: 0;
    width: 1054px;
    height: 700px;
    margin-left: 13px;
    box-shadow: 0 0 0 1.5px #e8e8e8;
`;

const ChartSvg = styled.svg`
    position: relative;
`;

const SubSvg = styled.svg`
    position: absolute;
    top: 0;
    left: 0;
    overflow: visible;
`;

const Watermark = styled.div`
    position: absolute;
    top: 295px;
    left: 353px;
    transform: skewX(-7deg);
`;

const Scale = styled.div`
    position: absolute;
    top: 162px;
    left: 12px;
    display: flex;
    flex-direction: column;
    gap: 132px;
`;

const Tools = styled.div`
    position: absolute;
    top: 619px;
    left: 8px;
    display: flex;
    gap: 104px;
`;

const Tool = styled.div`
    width: 72px;
    height: 72px;
    border-radius: 50%;
    background: rgba(232, 232, 232, 0.8);
`;

const Axis = styled.div`
    flex-shrink: 0;
    height: 80px;
    padding-left: 13px;
    background:
        linear-gradient(90deg, #fff, rgba(255, 255, 255, 0) 50%, rgba(255, 255, 255, 0) 75%, rgba(255, 255, 255, 0.6)),
        linear-gradient(#ececec, #fbfbfb);
`;

const Ticks = styled.div`
    display: flex;
    gap: 260.5px;
    padding: 1px 0 8px 259.5px;
`;

const Tick = styled.div`
    width: 3px;
    height: 15px;
    background: #808080;
`;

const Faded = styled.div`
    mask-image: linear-gradient(90deg, rgba(0, 0, 0, 0.35) 25%, #000 70%);
`;

const FadedEnd = styled.div`
    mask-image: linear-gradient(90deg, #000 75%, rgba(0, 0, 0, 0.45));
`;

const SubPanel = styled.div`
    position: relative;
    flex-shrink: 0;
    width: 1054px;
    height: ${(p) => p.$h}px;
    margin: ${(p) => p.$mt || 0}px 0 0 13px;
    box-shadow: 0 0 0 1.5px #e8e8e8;
    background: #fff;
`;

const SubHead = styled.div`
    position: relative;
    display: flex;
    align-items: center;
    padding: 12px 0 0 11px;
`;

const Help = styled.div`
    flex-shrink: 0;
    width: 36px;
    height: 36px;
    margin-left: 8px;
    border: 2px solid #b8b8b8;
    border-radius: 50%;
    color: #b0b0b0;
    font-size: 26px;
    line-height: 32px;
    text-align: center;
`;

const Dea = styled.div`
    position: relative;
    padding-left: 13px;
`;

const Bulb = styled.div`
    position: absolute;
    right: 2px;
    bottom: 2px;
    width: 88px;
    height: 88px;
    border-radius: 50%;
    background: rgba(94, 186, 252, 0.88);
`;

const Dotted = styled.div`
    position: relative;
    margin-left: ${(p) => p.$ml}px;
`;

const TabDot = styled(RedDot)`
    position: absolute;
    top: -13px;
    right: -14px;
`;

const BottomBar = styled.div`
    display: flex;
    flex-shrink: 0;
    height: 153px;
    margin-top: auto;
    background: #232323;
`;

const Sector = styled.div`
    display: flex;
    flex-direction: column;
    align-items: center;
    width: 248px;
    padding-top: 12px;

    > :nth-child(2) {
        margin-top: 21px;
    }
    > :nth-child(3) {
        margin-top: 24px;
    }
`;

const NavItem = styled.div`
    position: relative;
    display: flex;
    flex-direction: column;
    align-items: center;
    gap: 13px;
    width: 207.5px;
    padding-top: 20px;
`;

const NavDot = styled(RedDot)`
    position: absolute;
    top: ${(p) => p.$top}px;
    left: ${(p) => p.$left}px;
`;
